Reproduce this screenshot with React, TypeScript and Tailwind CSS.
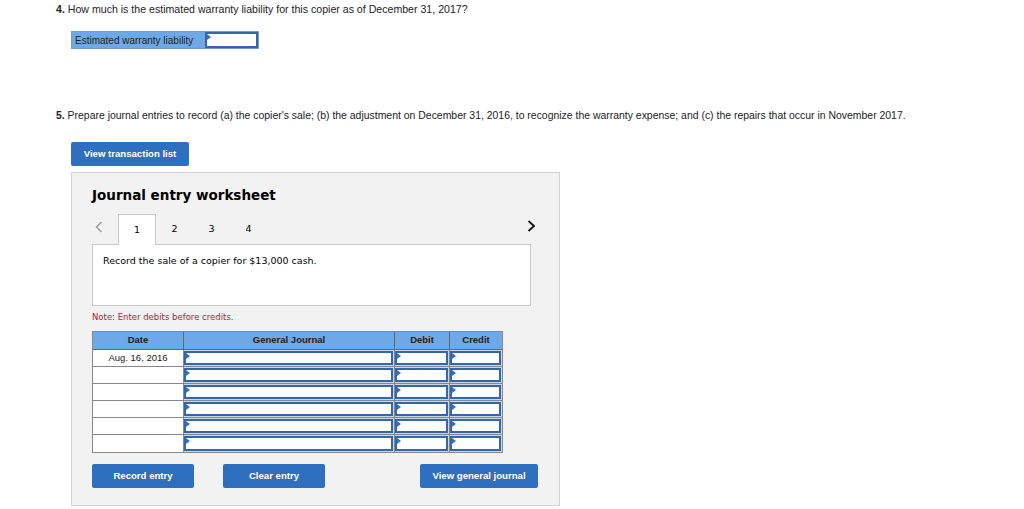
import React from "react";

const arial = { fontFamily: '"Liberation Sans", Arial, sans-serif' };
const verdana = { fontFamily: '"DejaVu Sans", Verdana, sans-serif' };

function Flag() {
    return (
        <span className="absolute left-0 top-0 h-0 w-0 border-y-[3px] border-l-[4px] border-y-transparent border-l-[#2a74d0]" />
    );
}

function InputCell({ w }: { w: string }) {
    return (
        <div className={`${w} h-full border-l border-[#888] bg-[#c9d6e8] p-px pl-0`}>
            <div className="relative h-full border-2 border-[#3466a8] bg-white">
                <Flag />
            </div>
        </div>
    );
}

function BlueButton({ label, className }: { label: string; className?: string }) {
    return (
        <button
            style={arial}
            className={`h-[24px] rounded-[2px] bg-[#2e6fbf] text-[9.6px] font-bold text-white ${className ?? ""}`}
        >
            {label}
        </button>
    );
}

export default function App() {
    const rows = ["Aug. 16, 2016", "", "", "", "", ""];

    return (
        <div className="h-[509px] w-[1024px] bg-white text-[#222]" style={arial}>
            <div className="pl-[56px] pt-[3px]">
                <p className="text-[10.6px] leading-[13px]">
                    <b>4.</b> How much is the estimated warranty liability for this copier as of December 31, 2017?
                </p>

                <div className="ml-[15px] mt-[15px] flex h-[18px] w-[188px] border border-[#7a9ccc]">
                    <div className="flex w-[133px] items-center bg-[#6fa8e6] pl-[3px] text-[10px]">Estimated warranty liability</div>
                    <div className="relative flex-1 border-2 border-[#3466a8] bg-white">
                        <Flag />
                    </div>
                </div>

                <p className="mt-[60px] text-[10.45px] leading-[13px]">
                    <b>5.</b> Prepare journal entries to record (a) the copier's sale; (b) the adjustment on December 31, 2016, to recognize the warranty expense; and (c) the repairs that occur in November 2017.
                </p>

                <BlueButton label="View transaction list" className="ml-[15px] mt-[20px] w-[118px]" />

                <div className="ml-[15px] mt-[6px] h-[334px] w-[489px] border border-[#d2d2d2] bg-[#f2f2f2] px-[20px]">
                    <h2 style={verdana} className="mt-[13px] text-[13.5px] font-bold leading-[18px] text-black">
                        Journal entry worksheet
                    </h2>

                    <div style={verdana} className="relative mt-[10px] flex h-[31px] items-end text-[9.5px] text-black">
                        <svg className="absolute left-[3px] top-[7px]" width="8" height="12" viewBox="0 0 8 12">
                            <path d="M6.5 1 L1.5 6 L6.5 11" fill="none" stroke="#9a9a9a" strokeWidth="1.4" />
                        </svg>
                        <div className="relative z-10 ml-[26px] flex h-[31px] w-[38px] items-center justify-center border border-b-0 border-[#c8c8c8] bg-white">1</div>
                        <div className="flex h-[31px] w-[37px] items-center justify-center">2</div>
                        <div className="flex h-[31px] w-[37px] items-center justify-center">3</div>
                        <div className="flex h-[31px] w-[37px] items-center justify-center">4</div>
                        <svg className="absolute left-[435px] top-[6px]" width="9" height="12" viewBox="0 0 9 12">
                            <path d="M1.5 1 L7 6 L1.5 11" fill="none" stroke="#111" strokeWidth="1.8" />
                        </svg>
                    </div>

                    <div style={verdana} className="-mt-px h-[62px] w-[439px] border border-[#c8c8c8] bg-white pl-[10px] pt-[10px] text-[9.5px] leading-[12px] text-black">
                        Record the sale of a copier for $13,000 cash.
                    </div>

                    <p style={verdana} className="mt-[6px] text-[8.5px] leading-[11px] text-[#c0143c]">
                        Note: Enter debits before credits.
                    </p>

                    <div className="mt-[8px] w-[411px] border border-[#888] text-[9.5px]" style={arial}>
                        <div className="flex h-[18px] border-b border-[#666] bg-[#6fa8e6] font-bold">
                            <div className="flex w-[90px] items-center justify-center">Date</div>
                            <div className="flex w-[211px] items-center justify-center border-l border-[#666]">General Journal</div>
                            <div className="flex w-[55px] items-center justify-center border-l border-[#666]">Debit</div>
                            <div className="flex w-[53px] items-center justify-center border-l border-[#666]">Credit</div>
                        </div>
                        {rows.map((d, i) => (
                            <div key={i} className={`flex h-[17px] ${i < rows.length - 1 ? "border-b border-[#888]" : ""}`}>
                                <div className="flex w-[90px] items-center justify-center bg-white">{d}</div>
                                <InputCell w="w-[211px]" />
                                <InputCell w="w-[55px]" />
                                <InputCell w="w-[53px]" />
                            </div>
                        ))}
                    </div>

                    <div className="mt-[11px] flex">
                        <BlueButton label="Record entry" className="w-[102px]" />
                        <BlueButton label="Clear entry" className="ml-[29px] w-[102px]" />
                        <BlueButton label="View general journal" className="ml-[95px] w-[118px]" />
                    </div>
                </div>
            </div>
        </div>
    );
}
